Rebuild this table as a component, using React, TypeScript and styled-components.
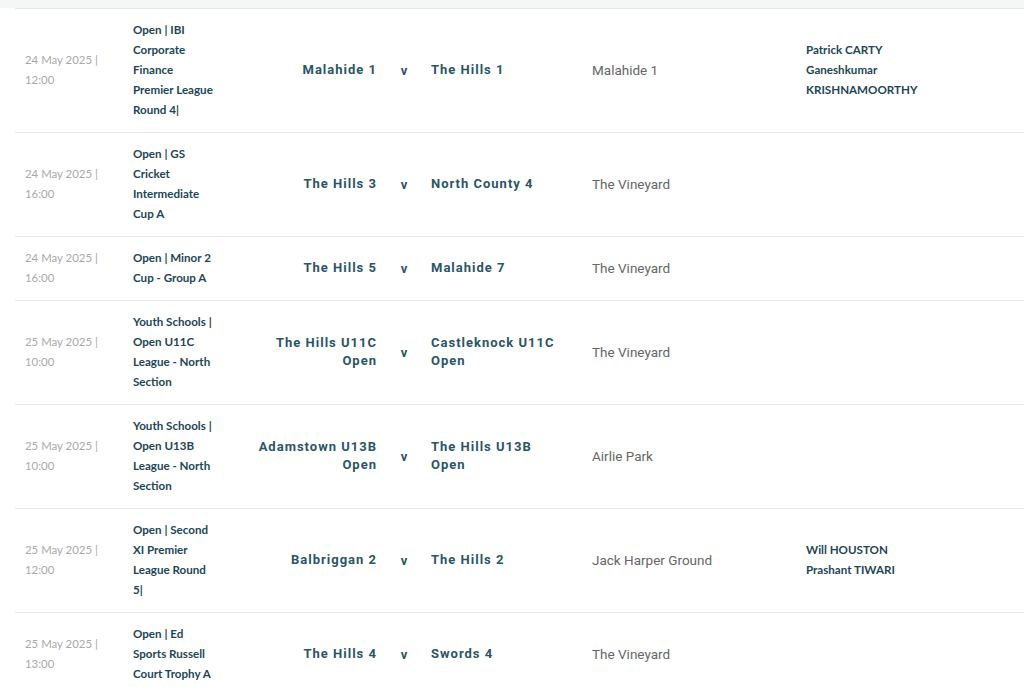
import styled, {createGlobalStyle} from 'styled-components';

const GlobalStyle = createGlobalStyle`
  html, body {
    margin: 0;
    padding: 0;
    background: #ffffff;
  }
`;

const Page = styled.div`
  width: 1024px;
  height: 687px;
  overflow: hidden;
  background: #ffffff;
`;

const TopBand = styled.div`
  height: 8px;
  background: #f5f6f6;
`;

const Table = styled.div`
  padding-left: 15px;
`;

const Row = styled.div`
  display: grid;
  grid-template-columns: 108px 114px 130px 54px 161px 214px 1fr;
  align-items: center;
  border-top: 1px solid #e2e8e8;
  padding: 11px 0 12px 10px;
`;

const DateCell = styled.div`
  font-family: Lato, 'Noto Sans', sans-serif;
  font-size: 11.4px;
  line-height: 20px;
  color: #a9a9a9;
  width: 82px;
`;

const CompCell = styled.div`
  font-family: Lato, 'Noto Sans', sans-serif;
  font-weight: 700;
  font-size: 11.6px;
  line-height: 20px;
  color: #1e4655;
  width: 83px;
`;

const Team = styled.div<{$home?: boolean}>`
  font-family: Roboto, 'Noto Sans', sans-serif;
  font-weight: 700;
  font-size: 13px;
  line-height: 18px;
  letter-spacing: 1px;
  color: #2b5566;
  text-align: ${(p) => (p.$home ? 'right' : 'left')};
  padding-right: ${(p) => (p.$home ? '0' : '30px')};
`;

const Versus = styled.div`
  font-family: Roboto, 'Noto Sans', sans-serif;
  font-weight: 700;
  font-size: 13px;
  color: #2b5566;
  text-align: center;
`;

const Venue = styled.div`
  font-family: Roboto, 'Noto Sans', sans-serif;
  font-size: 13.5px;
  color: #666666;
`;

const Umpires = styled.div`
  font-family: Lato, 'Noto Sans', sans-serif;
  font-weight: 700;
  font-size: 11.6px;
  line-height: 20px;
  color: #1e4655;
`;

type Fixture = {
  date: string;
  time: string;
  comp: string;
  home: string;
  away: string;
  venue: string;
  umpires?: string[];
};

const fixtures: Fixture[] = [
  {
    date: '24 May 2025 |',
    time: '12:00',
    comp: 'Open | IBI Corporate Finance Premier League Round 4|',
    home: 'Malahide 1',
    away: 'The Hills 1',
    venue: 'Malahide 1',
    umpires: ['Patrick CARTY', 'Ganeshkumar', 'KRISHNAMOORTHY'],
  },
  {
    date: '24 May 2025 |',
    time: '16:00',
    comp: 'Open | GS Cricket Intermediate Cup A',
    home: 'The Hills 3',
    away: 'North County 4',
    venue: 'The Vineyard',
  },
  {
    date: '24 May 2025 |',
    time: '16:00',
    comp: 'Open | Minor 2 Cup - Group A',
    home: 'The Hills 5',
    away: 'Malahide 7',
    venue: 'The Vineyard',
  },
  {
    date: '25 May 2025 |',
    time: '10:00',
    comp: 'Youth Schools | Open U11C League - North Section',
    home: 'The Hills U11C Open',
    away: 'Castleknock U11C Open',
    venue: 'The Vineyard',
  },
  {
    date: '25 May 2025 |',
    time: '10:00',
    comp: 'Youth Schools | Open U13B League - North Section',
    home: 'Adamstown U13B Open',
    away: 'The Hills U13B Open',
    venue: 'Airlie Park',
  },
  {
    date: '25 May 2025 |',
    time: '12:00',
    comp: 'Open | Second XI Premier League Round 5|',
    home: 'Balbriggan 2',
    away: 'The Hills 2',
    venue: 'Jack Harper Ground',
    umpires: ['Will HOUSTON', 'Prashant TIWARI'],
  },
  {
    date: '25 May 2025 |',
    time: '13:00',
    comp: 'Open | Ed Sports Russell Court Trophy A',
    home: 'The Hills 4',
    away: 'Swords 4',
    venue: 'The Vineyard',
  },
];

export default function App() {
  return (
    <Page>
      <GlobalStyle />
      <TopBand />
      <Table>
        {fixtures.map((f, i) => (
          <Row key={i}>
            <DateCell>
              {f.date}
              <br />
              {f.time}
            </DateCell>
            <CompCell>{f.comp}</CompCell>
            <Team $home>{f.home}</Team>
            <Versus>v</Versus>
            <Team>{f.away}</Team>
            <Venue>{f.venue}</Venue>
            <Umpires>
              {f.umpires?.map((u) => (
                <div key={u}>{u}</div>
              ))}
            </Umpires>
          </Row>
        ))}
      </Table>
    </Page>
  );
}
